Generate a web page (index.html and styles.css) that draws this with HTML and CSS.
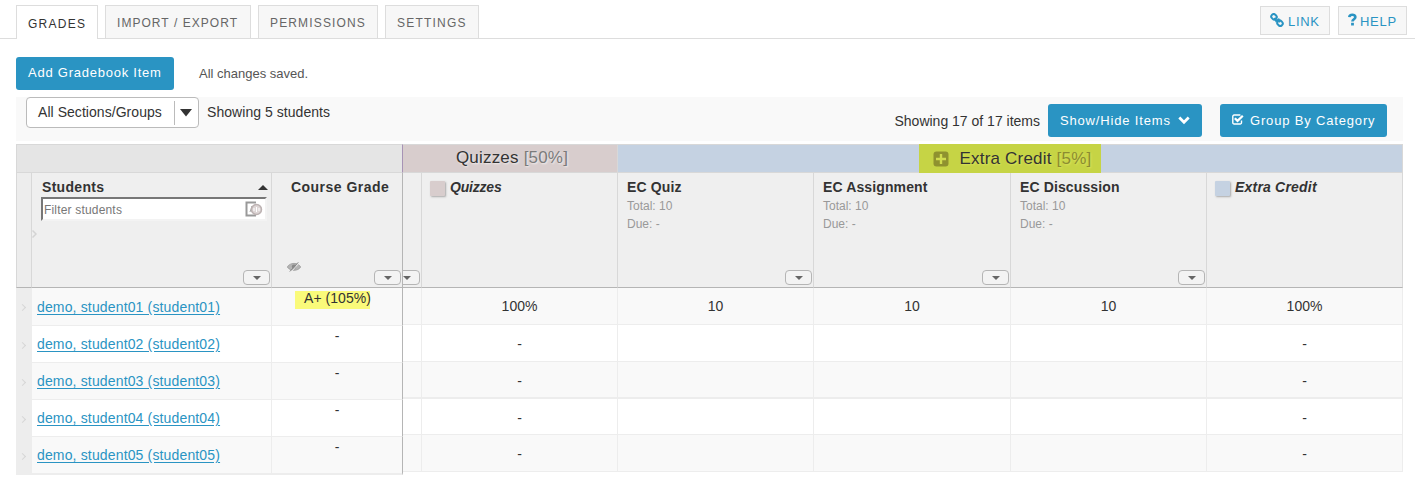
FILE: index.html
```html
<!DOCTYPE html>
<html lang="en">
<head>
<meta charset="utf-8">
<title>Gradebook</title>
<link rel="stylesheet" href="styles.css">
</head>
<body>
<nav class="tabs">
  <a class="tab active">GRADES</a>
  <a class="tab import">IMPORT / EXPORT</a>
  <a class="tab permissions">PERMISSIONS</a>
  <a class="tab settings">SETTINGS</a>
  <span class="spacer"></span>
  <a class="tool link"><svg width="14" height="14" viewBox="0 0 14 14" fill="none" stroke="currentColor" stroke-width="2"><rect x="1.200" y="1.400" width="5.600" height="4.800" rx="2.300" transform="rotate(45 4 3.800)"/><rect x="7.200" y="7.800" width="5.600" height="4.800" rx="2.300" transform="rotate(45 10 10.200)"/><path d="M4.600 4.800l1.600 3.200 2.400-1.600 1.200 3"/></svg>LINK</a>
  <a class="tool help"><svg width="9" height="13" viewBox="0 0 9 13"><path d="M1.300 4.200C1.500 1.100 7.400 1 7.400 4.100c0 2.200-3 2-3 4.400" fill="none" stroke="currentColor" stroke-width="2.600"/><path d="M3.100 9.800h2.800v2.700H3.100z" fill="currentColor"/></svg>HELP</a>
</nav>
<div class="actions">
  <button class="btn add">Add Gradebook Item</button>
  <span class="saved">All changes saved.</span>
</div>
<div class="toolbar">
  <div class="select"><span class="value">All Sections/Groups</span><span class="arrow"><svg width="12" height="8" viewBox="0 0 12 8"><path d="M0 0h12L6 7.5z" fill="#333"/></svg></span></div>
  <span class="count">Showing 5 students</span>
  <span class="spacer"></span>
  <span class="items">Showing 17 of 17 items</span>
  <button class="btn show">Show/Hide Items<svg width="12" height="9" viewBox="0 0 12 9"><path d="M1.3 1.6L6 6.2l4.700-4.600" fill="none" stroke="#fff" stroke-width="2.800"/></svg></button>
  <button class="btn group"><svg width="12" height="11" viewBox="0 0 12 11" fill="none" stroke="#fff"><path d="M9.500 6.500v2.200a1.300 1.300 0 0 1-1.300 1.300H2.100A1.300 1.300 0 0 1 .8 8.700V2.300A1.300 1.300 0 0 1 2.100 1h6.300" stroke-width="1.400"/><path d="M2.800 4.300l2.700 2.600 5.300-5.200" stroke-width="2.200"/></svg>Group By Category</button>
</div>
<main class="book">
  <section class="pane fixed">
    <div class="category"></div>
    <div class="cols head">
      <div class="cell gutter"></div>
      <div class="cell students">
        <div class="title">Students<svg width="10" height="5" viewBox="0 0 10 5"><path d="M0 5L5 0l5 5z" fill="#333"/></svg></div>
        <div class="filter">Filter students<svg width="18" height="16" viewBox="0 0 18 16" fill="none"><path d="M11 1.500H1.500v13H11" stroke="#999" stroke-width="2"/><path d="M5 11l2-6v6" stroke="#aaa"/><circle cx="11.500" cy="8.500" r="5" fill="#ddd5d5" stroke="#bcb2b2" stroke-width="1.500"/><path d="M9 7v3m2.500-4v5m2.500-4v3" stroke="#fff"/></svg></div>
        <svg class="resize" width="5" height="8" viewBox="0 0 5 8"><path d="M.5.5L4 4 .5 7.500" fill="none" stroke="#d4d4d4" stroke-width="1.500"/></svg>
        <span class="menu"></span>
      </div>
      <div class="cell course">
        <div class="title">Course Grade</div>
        <svg class="eye" width="14" height="10" viewBox="0 0 14 10"><path d="M.3 5C3 .2 11 .2 13.700 5 11 9.400 3 9.400.3 5z" fill="#b4b4b4" stroke="#999" stroke-width=".8"/><circle cx="7" cy="4.600" r="2.200" fill="#888"/><path d="M4 10L12.500.5" stroke="#efefef"/><path d="M2.800 9.500L11.300.3" stroke="#888"/></svg>
        <span class="menu"></span>
      </div>
    </div>
    <div class="cols row"><div class="gutter"><i></i></div><div class="cell"><a>demo, student01 (student01)</a></div><div class="cell grade"><mark>A+ (105%)</mark></div></div>
    <div class="cols row even"><div class="gutter"><i></i></div><div class="cell"><a>demo, student02 (student02)</a></div><div class="cell grade">-</div></div>
    <div class="cols row"><div class="gutter"><i></i></div><div class="cell"><a>demo, student03 (student03)</a></div><div class="cell grade">-</div></div>
    <div class="cols row even"><div class="gutter"><i></i></div><div class="cell"><a>demo, student04 (student04)</a></div><div class="cell grade">-</div></div>
    <div class="cols row"><div class="gutter"><i></i></div><div class="cell"><a>demo, student05 (student05)</a></div><div class="cell grade">-</div></div>
  </section>
  <section class="pane scores">
    <div class="categories">
      <div class="category quiz"><span>Quizzes <small>[50%]</small></span></div>
      <div class="category extra"><span class="marked"><svg width="16" height="16" viewBox="0 0 16 16"><rect x=".5" y=".5" width="15" height="15" rx="3" fill="#8f922f"/><path d="M8 3v10M3 8h10" stroke="#d0dc4e" stroke-width="2.400"/></svg>Extra Credit <small>[5%]</small></span></div>
    </div>
    <div class="cols head">
      <div class="cell clipped"><span class="menu"></span></div>
      <div class="cell"><div class="title summary"><b class="swatch rose"></b><em>Quizzes</em></div></div>
      <div class="cell"><div class="title">EC Quiz</div><p>Total: 10</p><p>Due: -</p><span class="menu"></span></div>
      <div class="cell"><div class="title">EC Assignment</div><p>Total: 10</p><p>Due: -</p><span class="menu"></span></div>
      <div class="cell"><div class="title">EC Discussion</div><p>Total: 10</p><p>Due: -</p><span class="menu"></span></div>
      <div class="cell"><div class="title summary"><b class="swatch blue"></b><em class="wide">Extra Credit</em></div></div>
    </div>
    <div class="cols row"><div class="cell"></div><div class="cell">100%</div><div class="cell">10</div><div class="cell">10</div><div class="cell">10</div><div class="cell">100%</div></div>
    <div class="cols row even"><div class="cell"></div><div class="cell">-</div><div class="cell"></div><div class="cell"></div><div class="cell"></div><div class="cell">-</div></div>
    <div class="cols row thick"><div class="cell"></div><div class="cell">-</div><div class="cell"></div><div class="cell"></div><div class="cell"></div><div class="cell">-</div></div>
    <div class="cols row even short"><div class="cell"></div><div class="cell">-</div><div class="cell"></div><div class="cell"></div><div class="cell"></div><div class="cell">-</div></div>
    <div class="cols row"><div class="cell"></div><div class="cell">-</div><div class="cell"></div><div class="cell"></div><div class="cell"></div><div class="cell">-</div></div>
  </section>
</main>
</body>
</html>
```
FILE: styles.css
```css
* { box-sizing: border-box; }
body { margin: 0; background: #fff; color: #333; font: 14px/18px "Liberation Sans", Arial, sans-serif; }
svg { display: block; flex: none; }
p { margin: 0; }
.spacer { flex: 1; }

/* Top navigation */
.tabs { display: flex; align-items: flex-start; height: 39px; padding: 5px 8px 0 16px; border-bottom: 1px solid #ddd; }
.tab { height: 33px; padding: 0 0 0 11px; margin-right: 7px; border: 1px solid #ddd; border-bottom: 0; background: #f7f7f7; color: #666; font-size: 12px; line-height: 34px; letter-spacing: 1.22px; white-space: nowrap; }
.tab.active { width: 82px; height: 34px; background: #fff; color: #333; line-height: 36px; letter-spacing: 1.25px; }
.tab.import { width: 146px; letter-spacing: 1.05px; }
.tab.permissions { width: 120px; letter-spacing: 1.15px; }
.tab.settings { width: 94px; }
.tool { display: flex; align-items: center; height: 29px; margin-top: 1px; border: 1px solid #ddd; background: #f7f7f7; color: #2a94c3; font-size: 13px; letter-spacing: .7px; padding: 3px 0 0 9px; }
.tool svg { margin-top: -5px; }
.tool.link { width: 70px; margin-right: 8px; gap: 4px; }
.tool.help { width: 69px; gap: 3px; }

/* Buttons */
.btn { display: flex; align-items: center; height: 33px; padding: 0 0 1px 12px; border: 0; border-radius: 3px; background: #2a94c3; color: #fff; font: 13px/18px "Liberation Sans", Arial, sans-serif; letter-spacing: .83px; white-space: nowrap; }
.actions { display: flex; align-items: center; height: 33px; margin: 18px 0 7px 16px; gap: 25px; }
.btn.add { width: 158px; letter-spacing: .76px; }
.saved { font-size: 13px; color: #555; }

.toolbar { display: flex; align-items: flex-start; width: 1387px; height: 44px; margin-left: 16px; padding: 0 16px 0 10px; background: #f9f9f9; }
.select { display: flex; align-items: center; width: 173px; height: 31px; border: 1px solid #bbb; border-radius: 4px; background: #fff; }
.value { width: 147px; padding: 0 0 1px 11px; letter-spacing: .05px; }
.arrow { height: 24px; padding: 8px 0 0 5px; border-left: 1px solid #bbb; }
.count { margin: 6px 0 0 8px; letter-spacing: .05px; }
.items { margin: 15px 8px 0 0; }
.btn.show { width: 154px; margin: 7px 18px 0 0; padding-bottom: 0; gap: 7px; }
.btn.group { width: 167px; margin-top: 7px; padding-bottom: 0; gap: 6px; }
.btn.group svg { margin-top: -2px; }

/* Gradebook */
.book { display: flex; align-items: flex-start; margin: 3px 0 0 16px; }
.fixed { width: 387px; }
.scores { width: 1000px; }
.cols { display: grid; }
.fixed .cols { grid-template-columns: 16px 240px 131px; }
.scores .cols { grid-template-columns: 19px 196px 196px 197px 196px 196px; }
.category { height: 29px; border: 1px solid #d8d8d8; border-left: 0; background: #e5e5e5; }
.fixed .category { border-left: 1px solid #d8d8d8; border-right-color: #a793b5; }
.categories { display: grid; grid-template-columns: 215px 785px; }
.categories .category { display: flex; align-items: center; justify-content: center; padding-bottom: 1px; font-size: 17px; letter-spacing: .2px; text-shadow: 1px 1px 2px rgba(255,255,255,.7); white-space: pre; }
.category.quiz { background: #d8cdcd; padding-left: 4px; }
.category.extra { background: #c5d2e2; }
.category small { font-size: 17px; color: #7b7b7b; }
.marked { display: flex; align-items: center; width: 182px; height: 29px; margin: 0 1px -1px 0; padding-left: 14px; background: #c6d445; text-shadow: 1px 1px 2px #dce35a; }
.marked svg { margin-right: 11px; }
.marked small { color: #8b8c31; }
.head { height: 115px; }
.head .cell { position: relative; padding: 5px 0 0 9px; border-right: 1px solid #d8d8d8; border-bottom: 1px solid #b5b5b5; background: #efefef; }
.head .gutter { border-left: 1px solid #d8d8d8; background: #ededed; }
.head p { font-size: 12px; color: #999; }
.title { font-weight: bold; letter-spacing: .12px; height: 19px; white-space: nowrap; }
.students .title { display: flex; justify-content: space-between; padding: 0 3px 0 1px; letter-spacing: .3px; }
.students .title svg { margin-top: 7px; }
.filter { display: flex; align-items: center; justify-content: space-between; width: 226px; height: 24px; padding: 1px 2px 0 1px; border: 2px solid #f3f3f3; border-top-color: #777; border-left-color: #777; background: #fff; color: #777; font-size: 12px; letter-spacing: .18px; }
.filter svg { margin-top: -1px; }
.resize { margin: 9px 0 0 -9px; }
.head .course { padding-left: 19px; border-right-color: #b5b5b5; }
.course .title { letter-spacing: .47px; }
.eye { margin: 65px 0 0 -4px; }
.menu { position: absolute; right: 1px; bottom: 2px; width: 27px; height: 15px; border: 1px solid #b5b5b5; border-radius: 4px; background: #f3f3f3; }
.menu::after { content: ""; display: block; width: 0; margin: 5px auto 0; border: 4px solid transparent; border-top-color: #666; border-bottom: 0; }
.clipped { overflow: hidden; }
.summary { display: flex; margin-left: -1px; letter-spacing: -.2px; }
.swatch { width: 15px; height: 15px; margin: 3px 5px 0 0; border-radius: 1px; box-shadow: 1px 1px 2px #aaa; }
.rose { background: #d8cdcd; }
.blue { background: #c5d2e2; }
.wide { letter-spacing: .2px; }
.row { height: 37px; }
.row .cell { border-right: 1px solid #ededed; border-bottom: 1px solid #ededed; background: #f9f9f9; }
.row.even .cell { background: #fff; }
.scores .row .cell { padding-top: 10px; text-align: center; }
.scores .row:nth-child(3) .cell { padding-top: 9px; }
.scores .row.thick .cell { border-bottom-width: 2px; }
.scores .row.short { height: 36px; }
.fixed .row .cell { padding: 9px 0 0 5px; }
.fixed .row:nth-child(3) { height: 38px; }
.fixed .row:nth-child(3) .cell { padding-top: 10px; }
.fixed .row:last-child { height: 38px; }
.fixed .row:last-child .cell { border-bottom-width: 2px; }
.row .gutter { background: #ededed; padding: 17px 0 0 4px; }
.gutter i { display: block; width: 5px; height: 5px; border: solid #d6d6d6; border-width: 1.5px 1.5px 0 0; transform: rotate(45deg); }
.fixed .row .cell.grade { padding: 1px 0 0; border-right-color: #b5b5b5; text-align: center; }
.row a { color: #2a94c3; letter-spacing: .15px; text-decoration: underline; text-underline-offset: 2px; }
mark { display: block; width: 75px; height: 18px; margin: 2px 0 0 23px; padding-left: 9px; background: #fafa7a; color: #333; line-height: 15px; text-align: left; white-space: nowrap; letter-spacing: .05px; }
```
